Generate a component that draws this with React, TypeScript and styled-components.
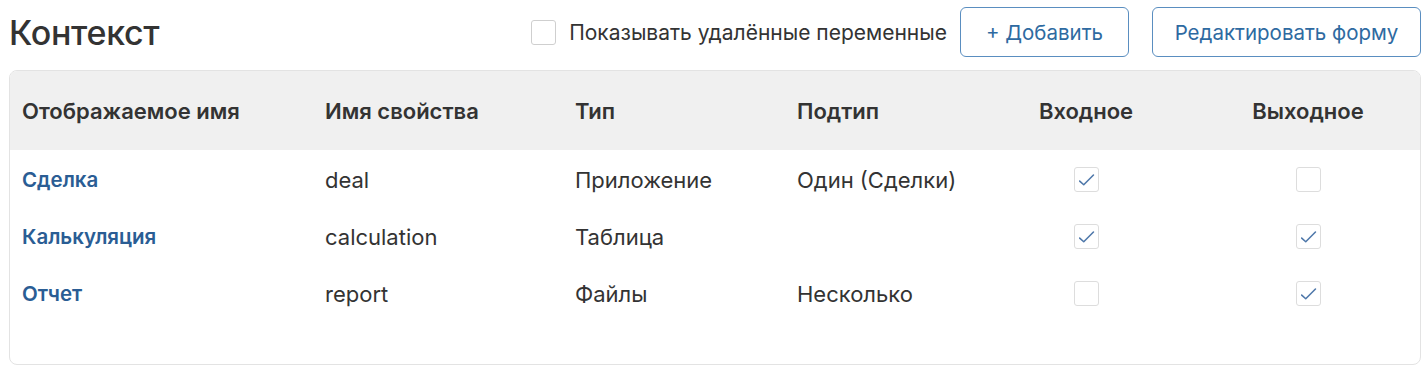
import React from "react";
import styled, { createGlobalStyle } from "styled-components";

const GlobalStyle = createGlobalStyle`
  body {
    margin: 0;
    background: #ffffff;
    font-family: Inter, Roboto, "Noto Sans", sans-serif;
    color: #333333;
  }
`;

interface Variable {
  name: string;
  prop: string;
  type: string;
  subtype: string;
  input: boolean;
  output: boolean;
}

const rows: Variable[] = [
  { name: "Сделка", prop: "deal", type: "Приложение", subtype: "Один (Сделки)", input: true, output: false },
  { name: "Калькуляция", prop: "calculation", type: "Таблица", subtype: "", input: true, output: true },
  { name: "Отчет", prop: "report", type: "Файлы", subtype: "Несколько", input: false, output: true },
];

const Check: React.FC<{ checked: boolean }> = ({ checked }) => (
  <Box>
    {checked && (
      <svg width="21" height="21" viewBox="0 0 16 16">
        <path d="M2.8 9.2 L5.9 12 L13.3 4.6" fill="none" stroke="#4f78aa" strokeWidth="1.2" strokeLinecap="round" strokeLinejoin="round" />
      </svg>
    )}
  </Box>
);

const App: React.FC = () => (
  <>
    <GlobalStyle />
    <Page>
      <Toolbar>
        <Title>Контекст</Title>
        <Actions>
          <ShowDeleted>
            <Box $light />
            Показывать удалённые переменные
          </ShowDeleted>
          <Button $width={169}>+ Добавить</Button>
          <Button $width={269}>Редактировать форму</Button>
        </Actions>
      </Toolbar>
      <Panel>
        <HeadRow>
          <HeadCell>Отображаемое имя</HeadCell>
          <HeadCell>Имя свойства</HeadCell>
          <HeadCell>Тип</HeadCell>
          <HeadCell>Подтип</HeadCell>
          <HeadCell $center>Входное</HeadCell>
          <HeadCell $center>Выходное</HeadCell>
        </HeadRow>
        <Body>
          {rows.map((r) => (
            <Row key={r.prop}>
              <NameLink>{r.name}</NameLink>
              <Cell>{r.prop}</Cell>
              <Cell>{r.type}</Cell>
              <Cell>{r.subtype}</Cell>
              <Cell $center>
                <Check checked={r.input} />
              </Cell>
              <Cell $center>
                <Check checked={r.output} />
              </Cell>
            </Row>
          ))}
        </Body>
      </Panel>
    </Page>
  </>
);

const Page = styled.div`
  width: 1427px;
  height: 372px;
  box-sizing: border-box;
  padding: 7px 6px 0 9px;
`;

const Toolbar = styled.div`
  display: flex;
  align-items: center;
  justify-content: space-between;
  height: 50px;
`;

const Title = styled.h1`
  margin: 0;
  font-size: 34px;
  font-weight: 500;
  color: #333333;
  letter-spacing: -0.3px;
`;

const Actions = styled.div`
  display: flex;
  align-items: center;
  gap: 23px;
`;

const ShowDeleted = styled.label`
  display: flex;
  align-items: center;
  gap: 13px;
  font-size: 21px;
  color: #333333;
  margin-right: -10px;
`;

const Button = styled.button<{ $width: number }>`
  width: ${(p) => p.$width}px;
  height: 50px;
  border: 1.5px solid #5a8ec0;
  border-radius: 6px;
  background: #ffffff;
  color: #2e6aa1;
  font-family: Inter, Roboto, sans-serif;
  font-size: 20.5px;
  padding: 0;
`;

const Panel = styled.div`
  margin-top: 13px;
  border: 1.5px solid #e3e3e3;
  border-radius: 8px;
  overflow: hidden;
  height: 295px;
  box-sizing: border-box;
`;

const grid = `
  display: grid;
  grid-template-columns: 303px 250px 222px 178px 222px 222px;
  padding-left: 12px;
  align-items: center;
`;

const HeadRow = styled.div`
  ${grid};
  height: 79px;
  background: #f0f0f0;
`;

const HeadCell = styled.div<{ $center?: boolean }>`
  font-size: 22px;
  font-weight: 600;
  color: #333333;
  text-align: ${(p) => (p.$center ? "center" : "left")};
`;

const Body = styled.div`
  padding-top: 1px;
`;

const Row = styled.div`
  ${grid};
  height: 57px;
`;

const Cell = styled.div<{ $center?: boolean }>`
  font-size: 22px;
  color: #333333;
  display: flex;
  justify-content: ${(p) => (p.$center ? "center" : "flex-start")};
`;

const NameLink = styled.a`
  font-size: 20.5px;
  font-weight: 600;
  color: #2a5d94;
  cursor: pointer;
`;

const Box = styled.span<{ $light?: boolean }>`
  display: inline-flex;
  align-items: center;
  justify-content: center;
  width: 25px;
  height: 25px;
  box-sizing: border-box;
  border: 1.5px solid ${(p) => (p.$light ? "#cfcfcf" : "#dddddd")};
  border-radius: 3px;
  background: #ffffff;
`;

export default App;
